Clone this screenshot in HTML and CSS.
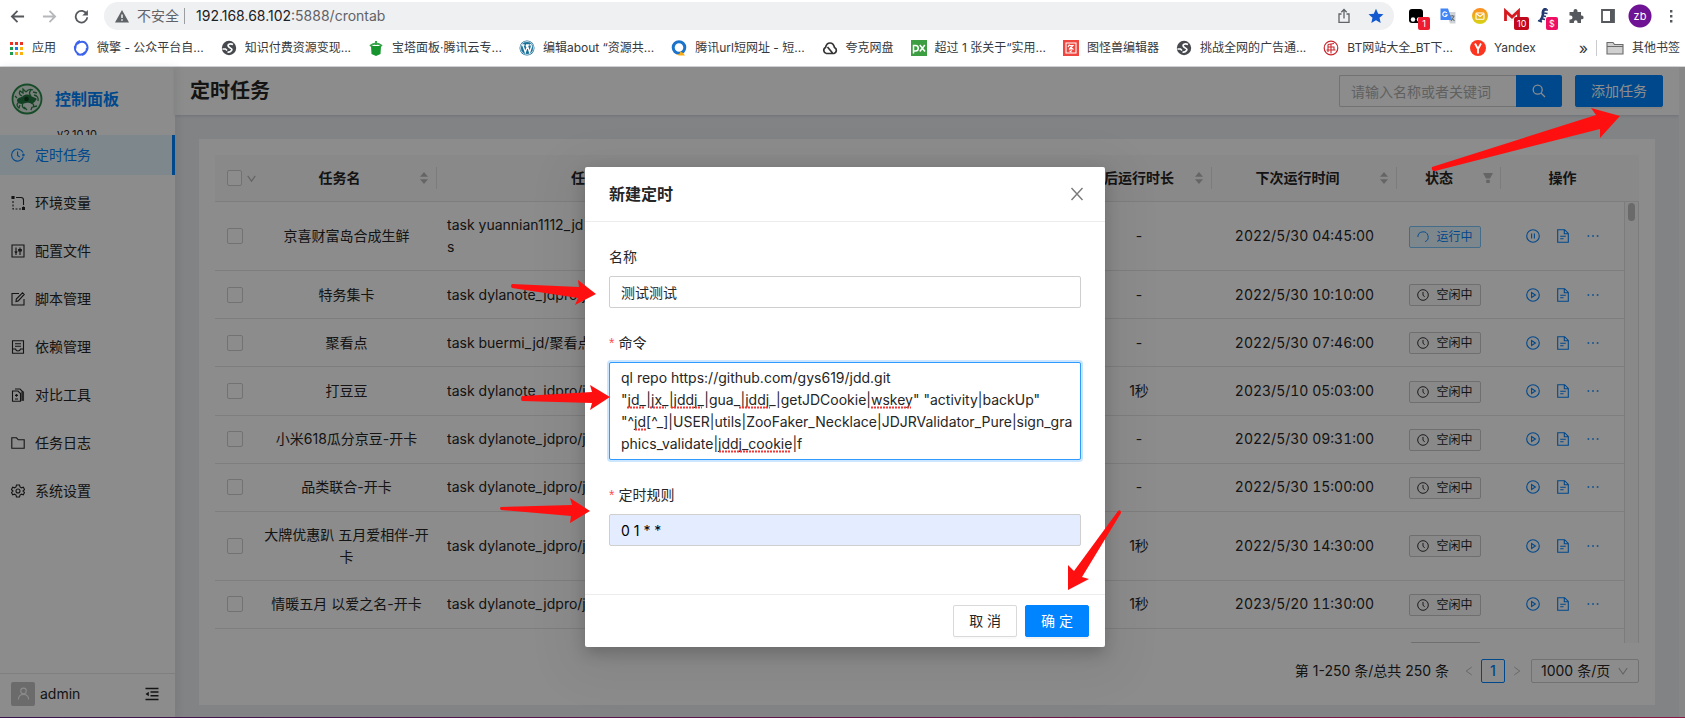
FILE: index.html
```html
<!DOCTYPE html>
<html lang="zh-CN">
<head>
<meta charset="utf-8">
<title>定时任务</title>
<link rel="stylesheet" href="styles.css">
</head>
<body>
<svg class="defs" aria-hidden="true">
  <symbol id="i-clock" viewBox="0 0 14 14"><circle cx="7" cy="7" r="6.2"/><path d="M7 3.4V7.4L9 9"/></symbol>
  <symbol id="i-loading" viewBox="0 0 14 14"><path d="M1 7A6 6 0 1 1 9.500 12.450"/></symbol>
  <symbol id="i-play" viewBox="0 0 14 14"><circle cx="7" cy="7" r="6.3"/><path d="M5.6 4.6V9.4L9.4 7Z"/></symbol>
  <symbol id="i-pause" viewBox="0 0 14 14"><circle cx="7" cy="7" r="6.3"/><path d="M5.6 4.6V9.4M8.4 4.6V9.4"/></symbol>
  <symbol id="i-doc" viewBox="0 0 14 14"><path d="M1.7.7H8.6L12.3 4.4V13.3H1.7ZM8.3.9V4.7H12.1M4.2 7.2H9.8M4.2 9.7H7.6"/></symbol>
  <symbol id="i-more" viewBox="0 0 14 14"><path d="M1.6 6.2h1.6v1.6H1.6zM6.2 6.2h1.6v1.6H6.2zM10.8 6.2h1.6v1.6h-1.6z" fill="currentColor" stroke="none"/></symbol>
  <symbol id="i-sort" viewBox="0 0 10 14"><path d="M5 1L9 5.800H1ZM5 13L9 8.200H1Z" fill="currentColor" stroke="none"/></symbol>
  <symbol id="i-down" viewBox="0 0 10 10"><path d="M.8 2L5 8L9.200 2"/></symbol>
  <symbol id="i-globe" viewBox="0 0 16 16"><circle cx="8" cy="8" r="7.200" fill="#46494d" stroke="none"/><path d="M12 4.500C9 3 6 4.500 7.500 6.500S12 8.500 10.500 10.500Q9 12.500 6.500 12M1.500 9H4.500L6 10.500" stroke="#fff" stroke-width="1.700"/></symbol>
</svg>

<header class="browser">
  <div class="toolbar">
    <button class="nav" aria-label="后退"><svg viewBox="0 0 16 16"><path d="M15 8H2M8 2L2 8L8 14"/></svg></button>
    <button class="nav nav-off" aria-label="前进"><svg viewBox="0 0 16 16"><path d="M1 8H14M8 2L14 8L8 14"/></svg></button>
    <button class="nav" aria-label="刷新"><svg viewBox="0 0 16 16"><path d="M13.600 5.500A6.200 6.200 0 1 0 14.200 8.800"/><path d="M14.800 1V7H8.800Z" fill="currentColor" stroke="none"/></svg></button>
    <div class="address">
      <svg class="warn" viewBox="0 0 14 14"><path d="M7 1L14 13.500H0Z" fill="#5f6368" stroke="none"/><path d="M7 5.500V9M7 10.300V11.700" stroke="#fff" stroke-width="1.400"/></svg>
      <span class="insecure">不安全</span>
      <span class="url"><b>192.168.68.102</b>:5888/crontab</span>
      <button class="ext" aria-label="分享"><svg viewBox="0 0 16 16"><path d="M5.500 6H3V14.300H13V6H10.500M8 10.500V1.500M5.300 4.200L8 1.500L10.700 4.200" stroke="#5f6368" stroke-width="1.300"/></svg></button>
      <button class="ext" aria-label="收藏"><svg viewBox="0 0 16 16"><path d="M8 .8L10.200 5.700L15.500 6.200L11.500 9.800L12.700 15L8 12.200L3.300 15L4.500 9.800L.5 6.200L5.800 5.700Z" fill="#1259d0" stroke="none"/></svg></button>
    </div>
    <div class="extensions">
      <button class="ext" aria-label="扩展 1"><svg viewBox="0 0 16 16"><rect x="1" y="1" width="14" height="14" rx="3" fill="#000" stroke="none"/><circle cx="5" cy="11.500" r="2.200" fill="#fff" stroke="none"/><circle cx="11" cy="11.500" r="2.200" fill="#fff" stroke="none"/></svg><span class="badge badge-red">1</span></button>
      <button class="ext" aria-label="翻译"><svg viewBox="0 0 16 16"><path d="M6 4H15.500V15.500H10Z" fill="#cfd3d8" stroke="none"/><path d="M.5.5H8L12 12H.5Z" fill="#4285f4" stroke="none"/><path d="M7 5A2.300 2.300 0 1 0 7.200 7H5.300" stroke="#fff" stroke-width="1.100"/><path d="M9.800 8H14.500M12.300 7V8M11 13L14 8.500M11.500 9.500L14.500 13" stroke="#66727d"/></svg></button>
      <button class="ext" aria-label="邮件"><svg viewBox="0 0 16 16"><defs><linearGradient id="g-mail" x2="0" y2="1"><stop stop-color="#ff8a1f"/><stop offset="1" stop-color="#d6d615"/></linearGradient></defs><circle cx="8" cy="8" r="8" fill="url(#g-mail)" stroke="none"/><rect x="4" y="5" width="8" height="6.300" rx=".8" stroke="#fff"/><path d="M4.500 5.800L8 8.500L11.500 5.800" stroke="#fff"/></svg></button>
      <button class="ext" aria-label="Gmail"><svg viewBox="0 0 16 16"><path d="M0 2H16V13H0Z" fill="#f3f3f3" stroke="none"/><path d="M1.500 13V3L8 9L14.500 3V13" stroke="#d5171e" stroke-width="2.800"/></svg><span class="badge badge-dark">10</span></button>
      <button class="ext" aria-label="扩展 2"><svg viewBox="0 0 16 16"><path d="M10.500 0Q6 2 7 6Q7 9 4 13" stroke="#233a70" stroke-width="2.600"/><path d="M9 2H12M8 5L11.500 5.500M7.500 8L10 8.500M5 10.500L9 11.500M2 12.500L6 14" stroke="#233a70" stroke-width="1.600"/></svg><span class="badge badge-pink">$</span></button>
      <button class="ext" aria-label="扩展程序"><svg viewBox="0 0 16 16"><path d="M1.500 4H5.500V3A2 2 0 0 1 9.500 3V4H13V7.500H13.700A1.900 1.900 0 0 1 13.700 11.300H13V15H9.500V14A1.800 1.800 0 0 0 5.900 14V15H1.500V11.500H2.500A2 2 0 0 0 2.500 7.500H1.500Z" fill="#55585c" stroke="none"/></svg></button>
      <button class="ext" aria-label="侧边栏"><svg viewBox="0 0 16 16"><path d="M2 2H14V14H2Z" stroke="#55585c" stroke-width="1.800"/><path d="M10 2H14V14H10Z" fill="#55585c" stroke="none"/></svg></button>
      <button class="ext profile" aria-label="账号">zb</button>
      <button class="ext" aria-label="更多"><svg viewBox="0 0 16 16"><path d="M7 2h2.400v2.400H7zM7 7h2.400v2.400H7zM7 12h2.400v2.400H7z" fill="#55585c" stroke="none"/></svg></button>
    </div>
  </div>
  <nav class="bookmarks" aria-label="书签">
    <a href="#" class="apps"><svg viewBox="0 0 16 16"><g stroke="none"><path d="M2 2h3v3H2zM7 2h3v3H7zM12 2h3v3h-3z" fill="#ea3323"/><path d="M2 7h3v3H2zM2 12h3v3H2z" fill="#1e9d4c"/><path d="M7 7h3v3H7z" fill="#1a7cf5"/><path d="M12 7h3v3h-3zM7 12h3v3H7zM12 12h3v3h-3z" fill="#fbb10c"/></g></svg>应用</a>
    <a href="#"><svg viewBox="0 0 16 16"><path d="M7 1Q2 3 2.500 8.500M2 6Q1 12 6.500 14.500M4 14Q9 16 12.500 12M9 15Q14 13 13.800 8M14 10.500Q16 5 11 2M13 3Q8 0 4 4" stroke="#3c62ee" stroke-width="1.900"/></svg>微擎 - 公众平台自...</a>
    <a href="#"><svg><use href="#i-globe"/></svg>知识付费资源变现...</a>
    <a href="#"><svg viewBox="0 0 16 16"><path d="M3 6H13L12.500 14L8 16L3.500 14Z" fill="#16952e" stroke="none"/><path d="M2 6Q8 1 14 6M8 1V5" stroke="#35a44a" stroke-width="2"/></svg>宝塔面板·腾讯云专...</a>
    <a href="#"><svg viewBox="0 0 16 16"><circle cx="8" cy="8" r="7.500" fill="#1b7099" stroke="none"/><circle cx="8" cy="8" r="6.500" stroke="#fff" stroke-width=".7"/><path d="M2.500 5H5.500M7 5H10.500M3.800 5.300L6.300 12.300L8.200 7L6.800 5.300M8.300 5.300L10.600 12.300L12.500 6.500L11.500 4" stroke="#fff" stroke-width="1.300"/></svg>编辑about “资源共...</a>
    <a href="#"><svg viewBox="0 0 16 16"><circle cx="8" cy="7.500" r="5.800" stroke="#1b74ca" stroke-width="3"/><path d="M5 14.200Q9.500 15 9 11.500Q12 12 14 15.500H8" fill="#f8ab15" stroke="none"/></svg>腾讯url短网址 - 短...</a>
    <a href="#"><svg viewBox="0 0 16 16"><path d="M4.500 13.500A3.200 3.200 0 0 1 3.500 7.500Q4.500 3 8 3T12.500 7.500A3.200 3.200 0 0 1 12 13.500ZM5.500 7L10.500 13" stroke="#333" stroke-width="1.700"/></svg>夸克网盘</a>
    <a href="#"><svg viewBox="0 0 16 16"><path d="M0 0H16V16H0Z" fill="#3c9e40" stroke="none"/><path d="M2.500 13.500V5.500H4.500A2.500 2.500 0 0 1 4.500 11H3M8.800 5L14 11.500M13.800 5L8.800 11.500" stroke="#fff" stroke-width="1.500"/></svg>超过 1 张关于“实用...</a>
    <a href="#"><svg viewBox="0 0 16 16"><path d="M0 0H16V16H0Z" fill="#ef4640" stroke="none"/><path d="M3 3H13V13H3ZM6.500 4.500L5 7M6.500 5.500H10L6 9.500M7 7L10.500 9.500M7.500 9.500L9 10.500M6.500 11L8.500 12" stroke="#fff"/></svg>图怪兽编辑器</a>
    <a href="#"><svg><use href="#i-globe"/></svg>挑战全网的广告通...</a>
    <a href="#"><svg viewBox="0 0 16 16"><circle cx="8" cy="8" r="6.800" stroke="#c8282e" stroke-width="1.200"/><path d="M5 4.500L11 3.500M5 4.500V8M8 4.500V13.500M3.500 10H12.500M5 7H11V9.500M5 8V12" stroke="#c8282e"/></svg>BT网站大全_BT下...</a>
    <a href="#"><svg viewBox="0 0 16 16"><circle cx="8" cy="8" r="8" fill="#fc3520" stroke="none"/><path d="M5 3.500L8 9L11 3.500M8 9V13.500" stroke="#fff" stroke-width="1.800"/></svg>Yandex</a>
    <span class="overflow">»</span>
    <a href="#" class="other"><svg viewBox="0 0 18 16"><path d="M1 2.500H7L8.500 4.500H17V14H1ZM1 6.500H17" fill="#d0d0d0" stroke="#6b6b6b"/></svg>其他书签</a>
  </nav>
</header>

<div class="app">
  <aside class="sidebar">
    <div class="brand">
      <svg class="logo" viewBox="0 0 32 32"><circle cx="16" cy="16" r="14.500" fill="#dfeae2" stroke="#2a8a4c" stroke-width="1.800"/><path d="M6 18C6 14 10 15 12 13C14 11 18 11 20 13C23 15 24 14 26 16C24 17 25 19 22 20C19 21 18 19 15 20C12 21 8 22 6 18Z" fill="#22763f" stroke="none"/><path d="M11 13Q7 11 9 8L12 10L12 6L15 9M15 9Q18 5 22 7M20 7Q17 10 20 13M22 9L26 10M23 12Q28 13 27 18M8 19Q4 22 8 25L9 22M12 20Q10 24 14 26M13 24L16 27M20 20Q24 21 22 24L26 23M21 24L20 27M4 13L6 15" stroke="#2a8048" stroke-width="1.300"/><circle cx="15.500" cy="16" r="2.300" fill="#123f22" stroke="none"/></svg>
      <div class="brand-text"><a href="#" class="brand-name">控制面板</a><span class="version">v2.10.10</span></div>
    </div>
    <nav class="menu" aria-label="主菜单">
      <a href="#" class="active"><svg viewBox="0 0 14 14"><path d="M12.200 9.200A6 6 0 1 1 12 4.500M6.600 3.500V7.500L8.800 9M11 7H14M12.200 5.500V8.500"/></svg>定时任务</a>
      <a href="#"><svg viewBox="0 0 14 14"><path d="M1 .5H3V2.500H1ZM11.500 11.500H13.500V13.500H11.500Z" fill="currentColor"/><path d="M5 1.500H10Q12.500 1.500 12.500 4V7" /><path d="M2 5V13H10.500M12.500 7V11" stroke-dasharray="2 1.500"/></svg>环境变量</a>
      <a href="#"><svg viewBox="0 0 14 14"><path d="M1 1H13V13H1ZM5 3.500V11M9 3.500V11M3.700 7.500L5 9L6.300 7.500M7.700 5.500H10.300V7H7.700Z"/></svg>配置文件</a>
      <a href="#"><svg viewBox="0 0 14 14"><path d="M8 1.500H1V13H13V7M5 9.500L5.300 7L11.500.8L13.200 2.500L7.200 8.900Z"/></svg>脚本管理</a>
      <a href="#"><svg viewBox="0 0 14 14"><path d="M1.500 .7H12.500V13.300H1.500ZM4 3.700H10M4 6.300H10M1.500 9H4.500Q5 11 7 11T9.500 9H12.500"/></svg>依赖管理</a>
      <a href="#"><svg viewBox="0 0 14 14"><path d="M1.500 3H7L9.500 5.500V13.300H1.500ZM4 1H9L12 4V12.500M5.500 6V8.800M4 7.400H7M4 11H7"/><path d="M10.500 4H12.500V12.500H10.500Z" fill="currentColor" opacity=".6"/></svg>对比工具</a>
      <a href="#"><svg viewBox="0 0 14 14"><path d="M.8 1.800H5.500L7.300 3.800H13.200V12.200H.8Z"/></svg>任务日志</a>
      <a href="#"><svg viewBox="0 0 14 14"><path d="M5.500 1H8.500L9 3L10.500 3.800L12.300 3.200L13.500 5.600L12 7L13.500 8.500L12.300 10.800L10.500 10.200L9 11L8.500 13H5.500L5 11L3.500 10.200L1.700 10.800L.5 8.500L2 7L.5 5.600L1.700 3.200L3.500 3.800L5 3Z"/><circle cx="7" cy="7" r="2"/></svg>系统设置</a>
    </nav>
    <div class="user">
      <span class="avatar"><svg viewBox="0 0 14 14"><circle cx="7" cy="4.200" r="3"/><path d="M1.500 13.500Q1.500 8 7 8T12.500 13.500"/></svg></span>
      <span class="user-name">admin</span>
      <button class="fold" aria-label="收起菜单"><svg viewBox="0 0 14 14"><path d="M.5 1.500H13.500M5.500 5H13.500M5.500 8.700H13.500M.5 12.500H13.500"/><path d="M.5 7L3.800 4.800V9.200Z" fill="currentColor" stroke="none"/></svg></button>
    </div>
  </aside>

  <main class="main">
    <header class="page-header">
      <h1>定时任务</h1>
      <form class="search">
        <input type="search" aria-label="搜索任务" placeholder="请输入名称或者关键词">
        <button type="button" aria-label="搜索"><svg viewBox="0 0 14 14"><circle cx="5.700" cy="5.700" r="4.500"/><path d="M9 9L13 13"/></svg></button>
      </form>
      <button class="btn btn-primary btn-add">添加任务</button>
    </header>

    <section class="card">
      <div class="table-wrap">
        <table>
          <colgroup><col class="c-check"><col class="c-name"><col class="c-cmd"><col><col class="c-cost"><col class="c-next"><col class="c-status"><col class="c-op"></colgroup>
          <thead>
            <tr>
              <th class="check"><div class="pick"><input type="checkbox" aria-label="全选"><svg><use href="#i-down"/></svg></div></th>
              <th><div class="th"><span>任务名</span><svg><use href="#i-sort"/></svg></div></th>
              <th>任务</th>
              <th></th>
              <th><div class="th"><span>最后运行时长</span><svg><use href="#i-sort"/></svg></div></th>
              <th><div class="th"><span>下次运行时间</span><svg><use href="#i-sort"/></svg></div></th>
              <th><div class="th th-filter"><span>状态</span><svg viewBox="0 0 10 14"><path d="M0 2H10L7 7.500H3ZM3.200 8.800H6.800V12H3.200Z" fill="currentColor" stroke="none"/></svg></div></th>
              <th>操作</th>
            </tr>
          </thead>
          <tbody>
            <tr><td class="check"><input type="checkbox" aria-label="选择"></td><td class="name">京喜财富岛合成生鲜</td><td class="cmd">task yuannian1112_jd<br>s</td><td></td><td>-</td><td class="time">2022/5/30 04:45:00</td><td><span class="tag tag-run"><svg><use href="#i-loading"/></svg>运行中</span></td><td><div class="ops"><button aria-label="停止"><svg><use href="#i-pause"/></svg></button><button aria-label="日志"><svg><use href="#i-doc"/></svg></button><button aria-label="更多"><svg><use href="#i-more"/></svg></button></div></td></tr>
            <tr><td class="check"><input type="checkbox" aria-label="选择"></td><td class="name">特务集卡</td><td class="cmd">task dylanote_jdpro/jd</td><td></td><td>-</td><td class="time">2022/5/30 10:10:00</td><td><span class="tag"><svg><use href="#i-clock"/></svg>空闲中</span></td><td><div class="ops"><button aria-label="运行"><svg><use href="#i-play"/></svg></button><button aria-label="日志"><svg><use href="#i-doc"/></svg></button><button aria-label="更多"><svg><use href="#i-more"/></svg></button></div></td></tr>
            <tr><td class="check"><input type="checkbox" aria-label="选择"></td><td class="name">聚看点</td><td class="cmd">task buermi_jd/聚看点</td><td></td><td>-</td><td class="time">2022/5/30 07:46:00</td><td><span class="tag"><svg><use href="#i-clock"/></svg>空闲中</span></td><td><div class="ops"><button aria-label="运行"><svg><use href="#i-play"/></svg></button><button aria-label="日志"><svg><use href="#i-doc"/></svg></button><button aria-label="更多"><svg><use href="#i-more"/></svg></button></div></td></tr>
            <tr><td class="check"><input type="checkbox" aria-label="选择"></td><td class="name">打豆豆</td><td class="cmd">task dylanote_jdpro/jd</td><td></td><td>1秒</td><td class="time">2023/5/10 05:03:00</td><td><span class="tag"><svg><use href="#i-clock"/></svg>空闲中</span></td><td><div class="ops"><button aria-label="运行"><svg><use href="#i-play"/></svg></button><button aria-label="日志"><svg><use href="#i-doc"/></svg></button><button aria-label="更多"><svg><use href="#i-more"/></svg></button></div></td></tr>
            <tr><td class="check"><input type="checkbox" aria-label="选择"></td><td class="name">小米618瓜分京豆-开卡</td><td class="cmd">task dylanote_jdpro/jd</td><td></td><td>-</td><td class="time">2022/5/30 09:31:00</td><td><span class="tag"><svg><use href="#i-clock"/></svg>空闲中</span></td><td><div class="ops"><button aria-label="运行"><svg><use href="#i-play"/></svg></button><button aria-label="日志"><svg><use href="#i-doc"/></svg></button><button aria-label="更多"><svg><use href="#i-more"/></svg></button></div></td></tr>
            <tr><td class="check"><input type="checkbox" aria-label="选择"></td><td class="name">品类联合-开卡</td><td class="cmd">task dylanote_jdpro/jd</td><td></td><td>-</td><td class="time">2022/5/30 15:00:00</td><td><span class="tag"><svg><use href="#i-clock"/></svg>空闲中</span></td><td><div class="ops"><button aria-label="运行"><svg><use href="#i-play"/></svg></button><button aria-label="日志"><svg><use href="#i-doc"/></svg></button><button aria-label="更多"><svg><use href="#i-more"/></svg></button></div></td></tr>
            <tr><td class="check"><input type="checkbox" aria-label="选择"></td><td class="name">大牌优惠趴 五月爱相伴-开卡</td><td class="cmd">task dylanote_jdpro/jd</td><td></td><td>1秒</td><td class="time">2022/5/30 14:30:00</td><td><span class="tag"><svg><use href="#i-clock"/></svg>空闲中</span></td><td><div class="ops"><button aria-label="运行"><svg><use href="#i-play"/></svg></button><button aria-label="日志"><svg><use href="#i-doc"/></svg></button><button aria-label="更多"><svg><use href="#i-more"/></svg></button></div></td></tr>
            <tr><td class="check"><input type="checkbox" aria-label="选择"></td><td class="name">情暖五月 以爱之名-开卡</td><td class="cmd">task dylanote_jdpro/jd</td><td></td><td>1秒</td><td class="time">2023/5/20 11:30:00</td><td><span class="tag"><svg><use href="#i-clock"/></svg>空闲中</span></td><td><div class="ops"><button aria-label="运行"><svg><use href="#i-play"/></svg></button><button aria-label="日志"><svg><use href="#i-doc"/></svg></button><button aria-label="更多"><svg><use href="#i-more"/></svg></button></div></td></tr>
            <tr><td></td><td></td><td></td><td></td><td></td><td></td><td><span class="tag tag-empty"></span></td><td></td></tr>
          </tbody>
        </table>
        <div class="gutter"><div class="gutter-head"></div><div class="track"><div class="thumb"></div></div></div>
      </div>
      <div class="pagination">
        <span class="total">第 1-250 条/总共 250 条</span>
        <button class="arrow" aria-label="上一页"><svg viewBox="0 0 10 14"><path d="M8.500 2L1.500 7L8.500 12"/></svg></button>
        <button class="page-no">1</button>
        <button class="arrow" aria-label="下一页"><svg viewBox="0 0 10 14"><path d="M1.500 2L8.500 7L1.500 12"/></svg></button>
        <div class="size"><select aria-label="每页条数"><option>1000 条/页</option></select><svg><use href="#i-down"/></svg></div>
      </div>
    </section>
  </main>
  <div class="page-scroll"></div>

  <div class="mask">
    <section class="modal" role="dialog" aria-labelledby="dlg-title">
      <header class="modal-head">
        <h2 id="dlg-title">新建定时</h2>
        <button class="close" aria-label="关闭"><svg viewBox="0 0 14 14"><path d="M1.500 1L12.500 13M12.500 1L1.500 13"/></svg></button>
      </header>
      <form class="modal-body">
        <div class="field"><label for="f-name">名称</label><input id="f-name" type="text" value="测试测试"></div>
        <div class="field"><label for="f-cmd" class="required">命令</label>
          <div class="editor">
            <textarea id="f-cmd" rows="4" spellcheck="false">ql repo https://github.com/gys619/jdd.git "jd_|jx_|jddj_|gua_|jddj_|getJDCookie|wskey" "activity|backUp" "^jd[^_]|USER|utils|ZooFaker_Necklace|JDJRValidator_Pure|sign_graphics_validate|jddj_cookie|f</textarea>
            <svg class="squiggles" viewBox="0 0 472 98"><path d="M18 45.500H36M41 45.500H57M62 45.500H93M130 45.500H161M262 45.500H302M26 67.500H38M110 89.500H182"/></svg>
          </div>
        </div>
        <div class="field"><label for="f-rule" class="required">定时规则</label><input id="f-rule" class="autofilled" type="text" value="0 1 * *"></div>
      </form>
      <footer class="modal-foot">
        <button class="btn">取 消</button>
        <button class="btn btn-primary">确 定</button>
      </footer>
    </section>
  </div>
</div>
<div class="desktop-edge"></div>

<svg class="annotations" viewBox="0 0 1685 718" width="1685" height="718" aria-hidden="true">
  <path d="M1432 167L1596 115L1591 108L1620 116L1600 138V129L1435 171Q1431 171 1432 167Z"/>
  <path d="M512 284L579 287L578 280L596 294L575 305L578 298L512 288Q510 286 512 284Z"/>
  <path d="M522 396L592 392L590 385L610 397L590 410L592 403L522 401Q520 399 522 396Z"/>
  <path d="M501 507L572 505L570 498L590 511L570 523L571 516L501 510Q499 508 501 507Z"/>
  <path d="M1118 511L1074 571L1068 565V590L1089 579L1082 577L1121 513Q1121 509 1118 511Z"/>
</svg>
</body>
</html>
```
FILE: styles.css
```css
* { box-sizing: border-box; }
body {
  margin: 0;
  height: 100vh;
  display: flex;
  flex-direction: column;
  overflow: hidden;
  background: #fff;
  color: #262626;
  font: 14px/22px Inter, "Noto Sans CJK SC", sans-serif;
}
button, input, textarea, select { font: inherit; color: inherit; margin: 0; }
button { border: 0; background: none; padding: 0; display: flex; align-items: center; justify-content: center; }
a { color: inherit; text-decoration: none; }
svg { fill: none; stroke: currentColor; stroke-width: 1.1; flex: none; }
h1, h2 { margin: 0; font-weight: 600; }
.defs { position: absolute; width: 0; height: 0; }

/* browser bar */
.browser { flex: none; height: 67px; border-bottom: 1px solid #d4d6d8; }
.toolbar { display: flex; align-items: center; height: 32px; padding-left: 8px; }
.nav { width: 32px; height: 32px; padding-right: 14px; color: #55585c; }
.nav svg { width: 15px; height: 15px; stroke-width: 1.9; }
.nav-off { color: #b5b7ba; }
.toolbar .address { flex: 1; display: flex; align-items: center; height: 28px; border-radius: 14px; background: #eff0f2; padding: 0 2px 0 11px; }
.warn { width: 14px; height: 14px; margin-right: 8px; }
.insecure { color: #5f6368; padding-right: 5px; border-right: 1px solid #9a9da1; line-height: 16px; margin-right: 11px; }
.url { flex: 1; color: #5f6368; }
.url b { font-weight: 400; color: #202124; }
.ext { position: relative; width: 32px; height: 28px; }
.ext svg { width: 16px; height: 16px; }
.extensions { display: flex; padding: 0 0 0 6px; }
.extensions .ext:last-child { width: 29px; }
.badge { position: absolute; left: 18px; top: 15px; min-width: 12px; height: 13px; padding: 0 3px; border-radius: 2px; color: #fff; font-size: 9px; line-height: 13px; }
.badge-red { background: #ee1c2e; }
.badge-dark { background: #c2081d; }
.badge-pink { background: #ee0e64; }
.profile { color: #fff; font-size: 11px; background: radial-gradient(circle, #6d1393 11px, transparent 12px); }
.bookmarks { display: flex; align-items: center; height: 34px; padding: 0 5px 2px 8px; font-size: 12px; color: #35383c; white-space: nowrap; }
.bookmarks a { display: flex; align-items: center; gap: 8px; margin-right: 17px; }
.bookmarks svg { width: 16px; height: 16px; }
.overflow { margin-left: auto; padding-right: 8px; border-right: 1px solid #c9cbce; line-height: 16px; font-size: 16px; }
.bookmarks .other { margin: 0 0 0 9px; }
.bookmarks .other svg { width: 18px; }

/* application */
.app { position: relative; flex: 1; min-height: 0; display: flex; }
.desktop-edge { flex: none; height: 1px; background: linear-gradient(90deg, #3c1650, #8c1848); }
.sidebar { position: relative; flex: none; width: 175px; display: flex; flex-direction: column; box-shadow: 2px 0 8px rgba(29, 35, 41, .08); z-index: 1; }
.brand { display: flex; gap: 12px; height: 68px; padding: 16px 11px 0; overflow: hidden; }
.logo { width: 32px; height: 32px; }
.brand-text { display: flex; flex-direction: column; }
.brand-name { color: #0084ff; font-size: 16px; font-weight: 600; line-height: 32px; }
.version { font-size: 11px; line-height: 18px; padding: 10px 0 0 2px; }
.menu { display: flex; flex-direction: column; gap: 8px; flex: 1; }
.menu a { display: flex; align-items: center; gap: 10px; height: 40px; padding-left: 11px; }
.menu svg { width: 14px; height: 14px; }
.menu .active { background: #e6f7ff; color: #0084ff; border-right: 3px solid #0084ff; }
.user { display: flex; align-items: center; height: 44px; padding: 0 16px 4px 11px; border-top: 1px solid #e8e8e8; }
.avatar { display: flex; align-items: center; justify-content: center; width: 24px; height: 24px; border-radius: 2px; background: #c4c4c4; color: #fff; }
.avatar svg { width: 13px; height: 13px; }
.user-name { flex: 1; padding-left: 5px; }
.fold svg { width: 14px; height: 14px; stroke-width: 1.4; }

.main { flex: 1; min-width: 0; display: flex; flex-direction: column; background: #ebeef2; }
.page-header { display: flex; align-items: center; height: 48px; padding: 0 16px 0 15px; background: #fff; box-shadow: 0 1px 3px rgba(0, 21, 41, .14); }
.page-header h1 { flex: 1; font-size: 20px; line-height: 32px; }
.search { display: flex; }
.search input { width: 177px; height: 32px; padding: 4px 11px; border: 1px solid #d0d0d0; border-right: 0; border-radius: 2px 0 0 2px; background: #fff; outline: 0; appearance: none; }
.search input::placeholder { color: #b0b0b0; }
.search button { width: 46px; height: 32px; background: #0084ff; color: #fff; border-radius: 0 2px 2px 0; }
.search svg { width: 14px; height: 14px; stroke-width: 1.3; }
.btn { height: 32px; padding: 0 15px; border: 1px solid #d9d9d9; border-radius: 2px; background: #fff; box-shadow: 0 2px 0 rgba(0, 0, 0, .02); }
.btn-primary { background: #0084ff; border-color: #0084ff; color: #fff; box-shadow: 0 2px 0 rgba(0, 0, 0, .05); }
.btn-add { margin-left: 13px; }

.card { flex: 1; min-height: 0; display: flex; flex-direction: column; margin: 24px 24px 12px; padding: 16px 16px 22px; background: #fff; }
.table-wrap { flex: 1; min-height: 0; overflow: hidden; display: flex; align-items: flex-start; }
table { flex: 1; width: 0; table-layout: fixed; border-spacing: 0; }
.c-check { width: 41px; }
.c-name { width: 181px; }
.c-cmd { width: 296px; }
.c-cost { width: 146px; }
.c-next { width: 185px; }
.c-status { width: 104px; }
.c-op { width: 123px; }
th, td { padding: 12px 8px; border-bottom: 1px solid #e6e6e6; text-align: center; }
th { position: relative; height: 47px; background: #fafafa; font-weight: 600; }
td { height: 48px; }
th:nth-child(n+2):not(:last-child)::after { content: ""; position: absolute; right: 0; top: 12px; width: 1px; height: 22px; background: #e2e2e2; }
.check { padding-left: 12px; padding-right: 0; text-align: left; }
.name { padding-left: 6px; padding-right: 6px; word-break: break-all; }
.cmd { text-align: left; padding-left: 10px; }
.time { font-variant-numeric: tabular-nums; }
.th { display: flex; align-items: center; gap: 4px; }
.th-filter { gap: 10px; }
.th span { flex: 1; }
.th svg { width: 10px; height: 14px; color: #b8b8b8; }
.pick { display: flex; align-items: center; gap: 5px; color: #b5b5b5; }
.pick svg { width: 9px; height: 9px; stroke-width: 1.3; }
input[type="checkbox"] { display: block; appearance: none; width: 16px; height: 16px; border: 1px solid #cfcfcf; border-radius: 2px; background: #fff; }
.tag { display: inline-flex; align-items: center; gap: 7px; height: 22px; padding: 0 7px; margin-right: 8px; border: 1px solid #cbcbcb; border-radius: 2px; background: #fafafa; font-size: 12px; line-height: 20px; vertical-align: middle; }
.tag svg { width: 12px; height: 12px; }
.tag-run { background: #e6f7ff; border-color: #7cc6fb; color: #0084ff; }
.tag-empty { width: 71px; }
.ops { display: flex; justify-content: center; gap: 16px; }
.ops button { color: #0084ff; }
.ops svg { width: 14px; height: 14px; }
.gutter { flex: none; align-self: stretch; width: 15px; display: flex; flex-direction: column; }
.gutter-head { height: 47px; background: #fafafa; border-bottom: 1px solid #e6e6e6; }
.track { flex: 1; border: solid #e2e2e2; border-width: 0 1px; background: #fafafa; padding: 1px 3px 0; }
.thumb { height: 18px; border-radius: 4px; background: #c1c1c1; }
.pagination { display: flex; align-items: center; justify-content: flex-end; height: 24px; margin-top: 16px; }
.arrow { width: 24px; height: 24px; color: #b5b5b5; }
.arrow svg { width: 8px; height: 12px; }
.total { margin-right: 8px; }
.page-no { width: 24px; height: 24px; border: 1px solid #0084ff; border-radius: 2px; color: #0084ff; font-weight: 500; }
.size { position: relative; width: 108px; margin-left: 2px; color: #262626; }
.size select { display: block; width: 100%; height: 24px; padding: 0 9px; border: 1px solid #d0d0d0; border-radius: 2px; background: #fff; appearance: none; line-height: 22px; }
.size svg { position: absolute; right: 11px; top: 7px; width: 10px; height: 10px; color: #b5b5b5; }
.page-scroll { flex: none; width: 6px; background: #f6f6f6; }

/* dialog */
.mask { position: absolute; inset: 0; z-index: 2; display: flex; justify-content: center; align-items: flex-start; padding: 100px 0 0 5px; background: rgba(0, 0, 0, .45); }
.modal { width: 520px; border-radius: 2px; background: #fff; box-shadow: 0 6px 16px rgba(0, 0, 0, .2), 0 12px 48px 16px rgba(0, 0, 0, .06); }
.modal-head { display: flex; align-items: center; justify-content: space-between; height: 55px; padding: 0 21px 0 24px; border-bottom: 1px solid #ececec; }
.modal-head h2 { font-size: 16px; }
.close { color: #7a7a7a; }
.close svg { width: 14px; height: 14px; stroke-width: 1.4; }
.modal-body { padding: 24px; }
.field { margin-bottom: 24px; }
.field label { display: block; margin-bottom: 8px; }
.required::before { content: "*"; color: #ff4d4f; margin-right: 4px; font-family: "Liberation Sans", sans-serif; }
.field input, .field textarea { display: block; width: 100%; padding: 4px 11px; border: 1px solid #cfcfcf; border-radius: 2px; outline: 0; background: #fff; line-height: 22px; }
.field input { height: 32px; }
.field .autofilled { background: #e4edff; color: #000; }
.editor { position: relative; }
.field textarea { height: 98px; padding-right: 2px; resize: none; overflow: hidden; border-color: #2f9bff; box-shadow: 0 0 0 2px rgba(0, 132, 255, .2); word-break: break-word; }
.squiggles { position: absolute; left: 0; top: 0; width: 100%; height: 98px; pointer-events: none; stroke: #f03a3a; stroke-width: 2; stroke-dasharray: 2 1; }
.modal-foot { display: flex; justify-content: flex-end; gap: 8px; padding: 10px 16px; border-top: 1px solid #ececec; }

.annotations { position: absolute; left: 0; top: 0; z-index: 3; pointer-events: none; fill: #ff1010; stroke: none; }
```
